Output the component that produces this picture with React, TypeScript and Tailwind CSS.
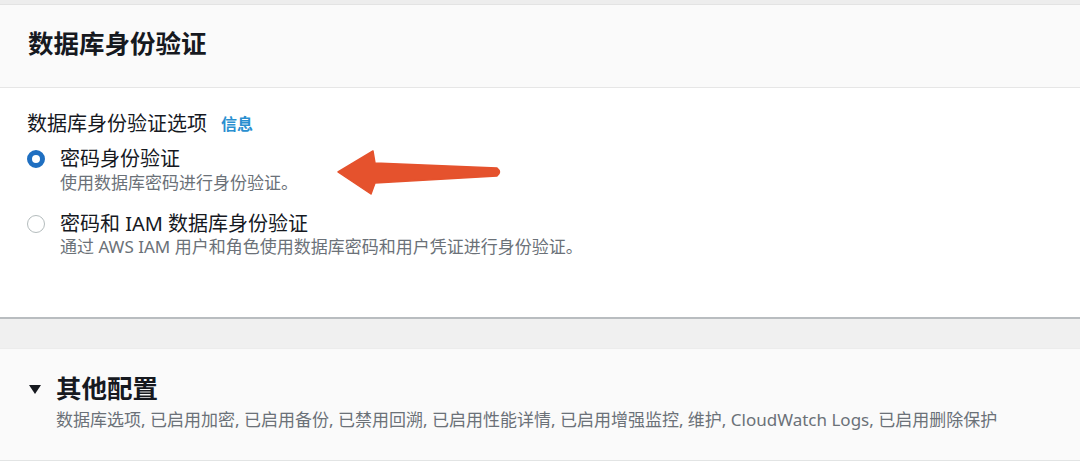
import React from "react";

const font = { fontFamily: '"Noto Sans", "Noto Sans CJK SC", sans-serif' };

function Arrow() {
  return (
    <svg
      className="absolute left-[330px] top-[145px]"
      width="180"
      height="60"
      viewBox="330 145 180 60"
    >
      <path
        d="M338 172 L373 151 L375 163 L497 168 Q502 172 497 176 L375 183 L371 194 Z"
        fill="#e5522d"
        stroke="#e5522d"
        strokeWidth="1.5"
        strokeLinejoin="round"
      />
    </svg>
  );
}

export default function App() {
  return (
    <div
      className="relative w-[1080px] h-[473px] bg-white overflow-hidden text-[#16191f]"
      style={font}
    >
      <div className="h-[5px] bg-[#ededed] border-b border-[#e3e3e3]" />
      <div className="h-[83px] bg-[#fafafa] border-b border-[#e6e6e6] flex items-center px-[28px] pb-[4px]">
        <h2 className="text-[25.5px] font-bold leading-none">数据库身份验证</h2>
      </div>
      <div className="h-[229px] bg-white">
        <div className="pt-[24px] px-[27px]">
          <div className="flex items-center gap-[14px] h-[24px]">
            <span className="text-[20px] leading-none">数据库身份验证选项</span>
            <span className="text-[16px] font-bold text-[#2a8fd0] leading-none">信息</span>
          </div>
          <div className="mt-[11px] flex gap-[15px]">
            <div className="pt-[3px]">
              <div className="w-[18px] h-[18px] rounded-full border-[5.5px] border-[#1f6fc1] bg-white" />
            </div>
            <div>
              <div className="text-[20px] leading-[24px]">密码身份验证</div>
              <div className="text-[17px] leading-[24px] text-[#6b7178]">使用数据库密码进行身份验证。</div>
            </div>
          </div>
          <div className="mt-[17px] flex gap-[15px]">
            <div className="pt-[3px]">
              <div className="w-[18px] h-[18px] rounded-full border-[1.5px] border-[#b4bcbd] bg-white" />
            </div>
            <div>
              <div className="text-[20px] leading-[24px]">密码和 IAM 数据库身份验证</div>
              <div className="text-[17px] leading-[22px] text-[#6b7178]">
                通过 AWS IAM 用户和角色使用数据库密码和用户凭证进行身份验证。
              </div>
            </div>
          </div>
        </div>
      </div>
      <div className="h-[2px] bg-[#b9bdc0]" />
      <div className="h-[29px] bg-[#f0f0f0]" />
      <div className="h-[113px] bg-[#fafafa] border-t border-[#ececec] border-b border-b-[#e2e4e4] px-[28px] pt-[26px]">
        <div className="flex items-center h-[28px]">
          <svg width="14" height="12" viewBox="0 0 14 12" className="mr-[14px]">
            <path d="M1 2 L13 2 L7 11 Z" fill="#16191f" />
          </svg>
          <span className="text-[25.5px] font-bold leading-none">其他配置</span>
        </div>
        <div className="ml-[28px] mt-[5px] text-[17px] leading-[24px] text-[#6b7178] whitespace-nowrap">
          数据库选项, 已启用加密, 已启用备份, 已禁用回溯, 已启用性能详情, 已启用增强监控, 维护, CloudWatch Logs, 已启用删除保护
        </div>
      </div>
      <Arrow />
    </div>
  );
}
